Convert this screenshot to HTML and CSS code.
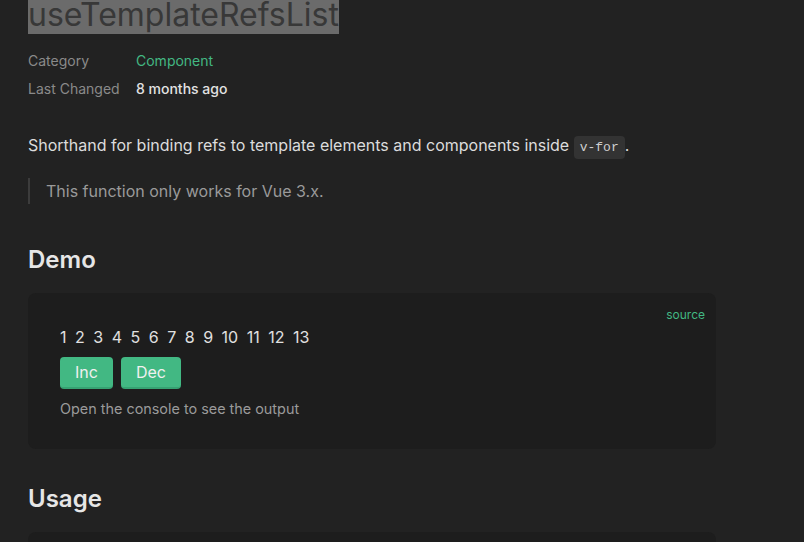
FILE: index.html
```html
<!DOCTYPE html>
<html lang="en">
<head>
<meta charset="utf-8">
<title>useTemplateRefsList</title>
<link rel="stylesheet" href="styles.css">
</head>
<body>
<main class="doc">
  <h1 class="title"><span class="title-mark">useTemplateRefsList</span></h1>
  <div class="meta">
    <div class="meta-label">Category</div>
    <div class="meta-value link">Component</div>
    <div class="meta-label">Last Changed</div>
    <div class="meta-value">8 months ago</div>
  </div>
  <p class="lead">Shorthand for binding refs to template elements and components inside <code class="code">v-for</code>.</p>
  <blockquote class="note"><p>This function only works for Vue 3.x.</p></blockquote>

  <h2 class="section">Demo</h2>
  <div class="demo">
    <a class="source">source</a>
    <div class="nums"><span>1</span> <span>2</span> <span>3</span> <span>4</span> <span>5</span> <span>6</span> <span>7</span> <span>8</span> <span>9</span> <span>10</span> <span>11</span> <span>12</span> <span>13</span></div>
    <div class="buttons">
      <button class="btn">Inc</button>
      <button class="btn">Dec</button>
    </div>
    <p class="hint">Open the console to see the output</p>
  </div>

  <h2 class="section section-usage">Usage</h2>
  <div class="code-block"></div>
</main>
</body>
</html>
```

FILE: styles.css
```css
html, body {
  margin: 0;
  padding: 0;
  background: #222222;
  height: 100%;
  overflow: hidden;
}
body {
  font-family: Inter, "Noto Sans", sans-serif;
  color: #dcdcdc;
}
.doc {
  padding: 0 28px;
  width: 688px;
}
.title {
  margin: -5px 0 0;
  font-size: 32px;
  line-height: 40px;
  font-weight: 400;
}
.title-mark {
  background: #6b6b6b;
  color: #383838;
}
.meta {
  display: grid;
  grid-template-columns: 108px auto;
  grid-auto-rows: 28px;
  align-items: center;
  margin-top: 11px;
  font-size: 14px;
}
.meta-label {
  color: #8a8a8a;
}
.meta-value {
  color: #e2e2e2;
  font-weight: 500;
}
.meta-value.link {
  color: #42b883;
  font-weight: 400;
}
.lead {
  margin: 31px 0 0;
  font-size: 16px;
  line-height: 24px;
}
.code {
  font-family: "Liberation Mono", "DejaVu Sans Mono", monospace;
  font-size: 13px;
  line-height: 1;
  background: #333333;
  color: #cfcfcf;
  padding: 4px 6px;
  border-radius: 4px;
}
.note {
  margin: 21px 0 0;
  border-left: 2px solid #3c3c3c;
  padding-left: 16px;
  color: #9a9a9a;
  font-size: 16px;
  line-height: 26px;
}
.note p { margin: 0; }
.section {
  margin: 40px 0 0;
  font-size: 24px;
  line-height: 32px;
  font-weight: 600;
  color: #e6e6e6;
}
.section-usage {
  margin-top: 34px;
}
.demo {
  position: relative;
  margin-top: 17px;
  background: #1d1d1d;
  border-radius: 8px;
  padding: 32px 32px 30px;
  height: 156px;
  box-sizing: border-box;
}
.source {
  position: absolute;
  top: 14px;
  right: 11px;
  font-size: 12px;
  line-height: 16px;
  color: #42b883;
}
.nums {
  font-size: 16px;
  line-height: 24px;
  color: #e0e0e0;
}
.nums span {
  margin-right: 4px;
}
.buttons {
  display: flex;
  gap: 8px;
  margin-top: 8px;
}
.btn {
  font-family: inherit;
  font-size: 16px;
  height: 32px;
  padding: 0 15px;
  border: 0;
  border-bottom: 2px solid #36a272;
  border-radius: 4px;
  background: #42b883;
  color: #f0f0f0;
}
.hint {
  margin: 10px 0 0;
  font-size: 14.4px;
  line-height: 20px;
  color: #9a9a9a;
}
.code-block {
  margin-top: 17px;
  height: 100px;
  background: #1d1d1d;
  border-radius: 8px;
}
```
